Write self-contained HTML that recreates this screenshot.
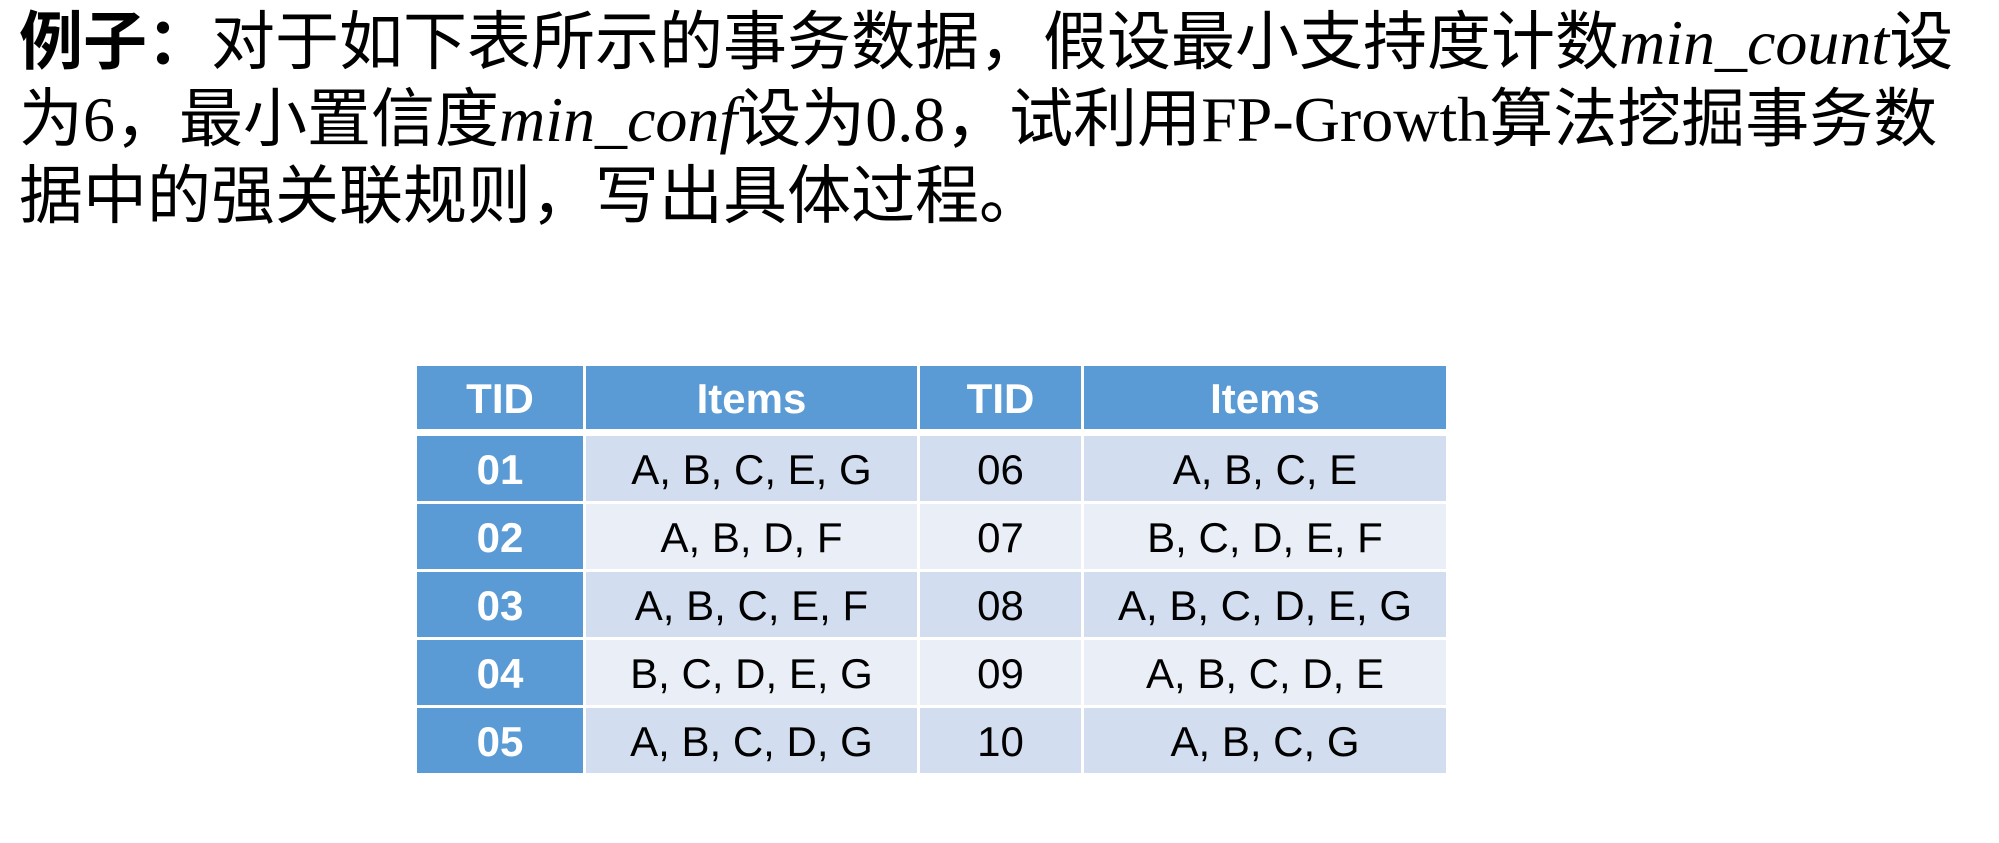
<!DOCTYPE html>
<html><head><meta charset="utf-8"><style>
body{margin:0;width:1999px;height:843px;background:#fff;overflow:hidden;position:relative}
.t{position:absolute;left:19px;top:4px;white-space:nowrap;font-family:"Liberation Serif","Noto Serif CJK SC",serif;font-size:64px;line-height:77px;color:#000}
.t .c{font-family:"Liberation Sans","Noto Sans CJK SC",sans-serif}
.t i{font-family:"Liberation Serif",serif}
table{position:absolute;left:417px;top:366px;border-collapse:separate;border-spacing:3px;margin:-3px;font-family:"Liberation Sans",sans-serif;font-size:42px;text-align:center}
td{padding:3px 0 0 0;height:62px;box-sizing:border-box}
td{height:65px}
tr.h td{background:#5B9BD5;color:#fff;font-weight:bold;height:67px;border-bottom:4px solid #fff}
td.id{background:#5B9BD5;color:#fff;font-weight:bold}
tr.o td{background:#D2DEEF}
tr.e td{background:#EAEFF7}
tr.o td.id,tr.e td.id{background:#5B9BD5}
</style></head><body>
<div class="t"><span class="c"><b>例子：</b>对于如下表所示的事务数据，假设最小支持度计数</span><i>min_count</i><span class="c">设</span><br><span class="c">为</span>6<span class="c">，最小置信度</span><i>min_conf</i><span class="c">设为</span>0.8<span class="c">，试利用</span>FP-Growth<span class="c">算法挖掘事务数</span><br><span class="c">据中的强关联规则，写出具体过程。</span></div>
<table>
<tr class="h"><td style="width:166px">TID</td><td style="width:331px">Items</td><td style="width:161px">TID</td><td style="width:362px">Items</td></tr>
<tr class="o"><td class="id">01</td><td>A, B, C, E, G</td><td>06</td><td>A, B, C, E</td></tr>
<tr class="e"><td class="id">02</td><td>A, B, D, F</td><td>07</td><td>B, C, D, E, F</td></tr>
<tr class="o"><td class="id">03</td><td>A, B, C, E, F</td><td>08</td><td>A, B, C, D, E, G</td></tr>
<tr class="e"><td class="id">04</td><td>B, C, D, E, G</td><td>09</td><td>A, B, C, D, E</td></tr>
<tr class="o"><td class="id">05</td><td>A, B, C, D, G</td><td>10</td><td>A, B, C, G</td></tr>
</table>
</body></html>
